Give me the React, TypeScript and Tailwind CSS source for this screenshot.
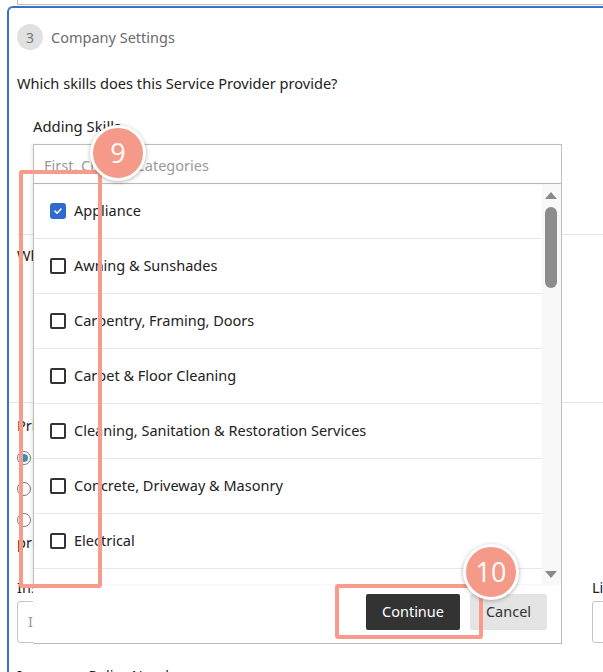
import React from "react";

const items = [
  { label: "Appliance", checked: true },
  { label: "Awning & Sunshades" },
  { label: "Carpentry, Framing, Doors" },
  { label: "Carpet & Floor Cleaning" },
  { label: "Cleaning, Sanitation & Restoration Services" },
  { label: "Concrete, Driveway & Masonry" },
  { label: "Electrical" },
  { label: "Fencing & Gates" },
];

function Checkbox({ checked }: { checked?: boolean }) {
  if (checked) {
    return (
      <span className="flex h-[16px] w-[16px] items-center justify-center rounded-[3px] bg-[#2f6ad0]">
        <svg width="10" height="10" viewBox="0 0 10 10">
          <path d="M2 5.2 L4.1 7.2 L8 3" fill="none" stroke="white" strokeWidth="1.6" strokeLinecap="round" strokeLinejoin="round" />
        </svg>
      </span>
    );
  }
  return <span className="block h-[16px] w-[16px] rounded-[2px] border-2 border-[#333]" />;
}

function Radio({ checked }: { checked?: boolean }) {
  return (
    <span className="flex h-[14px] w-[14px] items-center justify-center rounded-full border border-[#777]">
      {checked && <span className="block h-[8px] w-[8px] rounded-full bg-[#3d8fae]" />}
    </span>
  );
}

export default function App() {
  return (
    <div className="relative h-[672px] w-[603px] overflow-hidden bg-white text-[#222] [font-family:'Noto_Sans',sans-serif]">
      {/* previous card edge */}
      <div className="ml-[17px] h-[5px] border-b border-l border-[#bdbdbd]" />
      {/* blue card */}
      <div className="ml-[7px] mt-[1px] h-[700px] w-[640px] rounded-tl-[6px] border-l-2 border-t-2 border-[#3470cc] pl-[8px]">
        <div className="mt-[16px] flex h-[26px] items-center gap-[8px]">
          <span className="flex h-[26px] w-[26px] items-center justify-center rounded-full bg-[#e1e1e1] text-[14px] text-[#777]">3</span>
          <span className="text-[14.5px] leading-[20px] text-[#6b6b6b]">Company Settings</span>
        </div>
        <div className="mt-[23px] text-[14.6px] leading-[20px] text-[#222]">Which skills does this Service Provider provide?</div>
        <div className="ml-[16px] mt-[23px] text-[14.8px] leading-[20px] text-[#222]">Adding Skills</div>
        <div className="mt-[98px] h-px w-[600px] bg-[#e6e6e6]" />
        <div className="mt-[10px] text-[14.5px] leading-[20px]">What other services do you offer?</div>
        <div className="ml-[-8px] mt-[137px] h-px w-[620px] bg-[#e6e6e6]" />
        <div className="mt-[12px] text-[14.5px] leading-[20px]">Primary service type</div>
        <div className="mt-[16px] flex flex-col gap-[17px]">
          <div className="flex h-[14px] items-center gap-2 text-[14.5px]"><Radio checked /><span>Residential</span></div>
          <div className="flex h-[14px] items-center gap-2 text-[14.5px]"><Radio /><span>Commercial</span></div>
          <div className="flex h-[14px] items-center gap-2 text-[14.5px]"><Radio /><span>Both</span></div>
        </div>
        <div className="mt-[5px] text-[14.5px] leading-[20px]">pricing</div>
        <div className="mt-[25px] flex gap-[31px]">
          <div className="flex w-[544px] shrink-0 flex-col">
            <div className="text-[14.5px] leading-[20px]">Insurance Company</div>
            <div className="mt-[4px] flex h-[42px] items-center rounded-[3px] border border-[#c4c4c4] pl-[10px] text-[14.5px] text-[#999]">Insurance Company</div>
          </div>
          <div className="flex w-[200px] shrink-0 flex-col">
            <div className="text-[14.5px] leading-[20px]">License</div>
            <div className="mt-[4px] h-[42px] rounded-[3px] border border-[#c4c4c4]" />
          </div>
        </div>
        <div className="mt-[22px] text-[14.5px] leading-[20px]">Insurance Policy Number</div>
      </div>

      {/* popup */}
      <div className="absolute left-[33px] top-[144px] flex w-[529px] flex-col bg-white">
        <div className="flex h-[40px] items-center border border-[#bdbdbd] pl-[10px] pt-[4px] text-[14.5px] text-[#9a9a9a] shadow-[-2px_0_3px_rgba(0,0,0,0.06)]">
          First, Choose Categories
        </div>
        <div className="flex h-[400px] border-l border-r border-[#bdbdbd] shadow-[-2px_0_3px_rgba(0,0,0,0.08)]">
          <div className="h-full flex-1 overflow-hidden">
            {items.map((it) => (
              <div key={it.label} className="flex h-[55px] shrink-0 items-center gap-[8px] border-b border-[#e8e8e8] pl-[16px] text-[14.5px] text-[#222]">
                <Checkbox checked={it.checked} />
                <span>{it.label}</span>
              </div>
            ))}
          </div>
          <div className="relative w-[19px] bg-[#f8f8f8]">
            <svg className="absolute left-[3px] top-[7px]" width="12" height="8" viewBox="0 0 12 8"><path d="M0 8 L6 1 L12 8 Z" fill="#8a8a8a" /></svg>
            <div className="absolute left-[3px] top-[23px] h-[81px] w-[12px] rounded-full bg-[#8c8c8c]" />
            <svg className="absolute bottom-[5px] left-[3px]" width="12" height="8" viewBox="0 0 12 8"><path d="M0 0 L6 7 L12 0 Z" fill="#8a8a8a" /></svg>
          </div>
        </div>
        <div className="flex h-[60px] items-start justify-end gap-[10px] border-b border-r border-[#bdbdbd] pr-[14px] pt-[10px]">
          <button className="h-[36px] w-[94px] rounded-[2px] bg-[#333] text-[14.5px] text-white">Continue</button>
          <button className="h-[36px] w-[77px] rounded-[2px] bg-[#e4e4e4] text-[14.5px] text-[#333]">Cancel</button>
        </div>
      </div>

      {/* annotations */}
      <div className="absolute left-[19px] top-[170px] h-[418px] w-[83px] rounded-[3px] border-4 border-[#f79c8c]" />
      <div className="absolute left-[335px] top-[584px] h-[55px] w-[148px] rounded-[3px] border-4 border-[#f79c8c]" />
      <div className="absolute left-[90px] top-[125px] flex h-[56px] w-[56px] items-center justify-center rounded-full border-[3px] border-white bg-[#f59a89] text-[27px] text-white shadow-[0_1px_4px_rgba(0,0,0,0.3)] [font-family:'Open_Sans',sans-serif]">9</div>
      <div className="absolute left-[463px] top-[544px] flex h-[56px] w-[56px] items-center justify-center rounded-full border-[3px] border-white bg-[#f59a89] text-[27px] text-white shadow-[0_1px_4px_rgba(0,0,0,0.3)] [font-family:'Open_Sans',sans-serif]">10</div>
    </div>
  );
}
